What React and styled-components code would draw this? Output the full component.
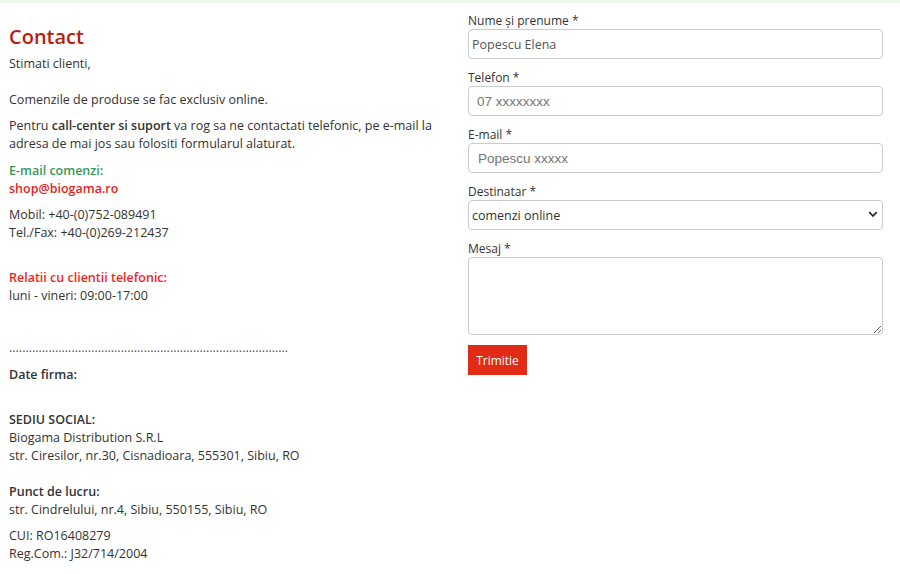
import React from "react";
import styled, { createGlobalStyle } from "styled-components";

const Global = createGlobalStyle`
  html, body { margin: 0; padding: 0; background: #fff; }
  body { font-family: "Open Sans", "Noto Sans", sans-serif; color: #333; font-size: 12.5px; }
  * { box-sizing: border-box; }
`;

const TopStrip = styled.div`
  height: 3px;
  background: #edf7ec;
`;

const Page = styled.div`
  display: grid;
  grid-template-columns: 444px 415px;
  column-gap: 15px;
  padding-left: 9px;
`;

const Info = styled.div`
  display: flex;
  flex-direction: column;
  padding-top: 21px;
`;

const Title = styled.h1`
  margin: 0;
  font-size: 20px;
  line-height: 26px;
  font-weight: 600;
  color: #b81c12;
`;

const P = styled.p`
  margin: ${(p) => p.$mt ?? 8}px 0 0;
  line-height: 18px;
  font-size: 12.5px;
  color: #333;
`;

const Strong = styled.b`
  font-weight: 600;
`;

const Accent = styled.span`
  font-weight: 600;
  color: ${(p) => p.$color};
`;

const Dots = styled.p`
  margin: ${(p) => p.$mt}px 0 0;
  line-height: 18px;
  font-size: 12.5px;
  color: #555;
  white-space: nowrap;
`;

const Form = styled.form`
  display: flex;
  flex-direction: column;
  padding-top: 8px;
`;

const Group = styled.div`
  display: flex;
  flex-direction: column;
  margin-bottom: 9px;
`;

const Label = styled.label`
  font-size: 12px;
  line-height: 18px;
  padding-top: 1px;
  margin-bottom: -1px;
  color: #333;
`;

const Input = styled.input`
  height: 30px;
  width: 100%;
  border: 1px solid #ccc;
  border-radius: 4px;
  padding: 0 ${(p) => p.$pad}px;
  font-family: "Open Sans", sans-serif;
  font-size: 12.5px;
  color: #555;
  background: #fff;
  outline: none;
  &::placeholder {
    font-family: "Liberation Sans", Arial, sans-serif;
    font-size: 13.5px;
    color: #757575;
  }
`;

const SelectWrap = styled.div`
  position: relative;
  height: 30px;
`;

const Select = styled.select`
  appearance: none;
  height: 30px;
  width: 100%;
  border: 1px solid #ccc;
  border-radius: 4px;
  padding: 0 3px;
  font-family: "Open Sans", sans-serif;
  font-size: 12.5px;
  color: #333;
  background: #fff;
  outline: none;
`;

const Chevron = styled.svg`
  position: absolute;
  right: 5px;
  top: 11px;
  pointer-events: none;
`;

const TextArea = styled.textarea`
  height: 78px;
  width: 100%;
  border: 1px solid #ccc;
  border-radius: 4px;
  resize: vertical;
  font-family: "Open Sans", sans-serif;
  font-size: 12.5px;
  outline: none;
`;

const Button = styled.button`
  align-self: flex-start;
  margin-top: 1px;
  height: 30px;
  width: 59px;
  padding: 0;
  border: none;
  background: #e12b16;
  color: #fff;
  font-family: "Open Sans", sans-serif;
  font-size: 12px;
  cursor: pointer;
`;

export default function App() {
  return (
    <>
      <Global />
      <TopStrip />
      <Page>
        <Info>
          <Title>Contact</Title>
          <P $mt={5}>
            Stimati clienti,
            <br />
            <br />
            Comenzile de produse se fac exclusiv online.
          </P>
          <P>
            Pentru <Strong>call-center si suport</Strong> va rog sa ne contactati telefonic, pe e-mail la adresa de mai jos sau folositi formularul alaturat.
          </P>
          <P $mt={9}>
            <Accent $color="#36995a">E-mail comenzi:</Accent>
            <br />
            <Accent $color="#e8231c">shop@biogama.ro</Accent>
          </P>
          <P>
            Mobil: +40-(0)752-089491
            <br />
            Tel./Fax: +40-(0)269-212437
          </P>
          <P $mt={9}>
            <br />
            <Accent $color="#ff1a1a">Relatii cu clientii telefonic:</Accent>
            <br />
            luni - vineri: 09:00-17:00
          </P>
          <P $mt={8}>&nbsp;</P>
          <Dots $mt={8}>{".".repeat(85)}</Dots>
          <P $mt={9}>
            <Strong>Date firma:</Strong>
          </P>
          <P $mt={9}>
            <br />
            <Strong>SEDIU SOCIAL:</Strong>
            <br />
            Biogama Distribution S.R.L
            <br />
            str. Ciresilor, nr.30, Cisnadioara, 555301, Sibiu, RO
            <br />
            <br />
            <Strong>Punct de lucru:</Strong>
            <br />
            str. Cindrelului, nr.4, Sibiu, 550155, Sibiu, RO
          </P>
          <P $mt={8}>
            CUI: RO16408279
            <br />
            Reg.Com.: J32/714/2004
          </P>
        </Info>
        <Form onSubmit={(e) => e.preventDefault()}>
          <Group>
            <Label>Nume și prenume *</Label>
            <Input $pad={3} defaultValue="Popescu Elena" />
          </Group>
          <Group>
            <Label>Telefon *</Label>
            <Input $pad={8} placeholder="07 xxxxxxxx" />
          </Group>
          <Group>
            <Label>E-mail *</Label>
            <Input $pad={9} placeholder="Popescu xxxxx" />
          </Group>
          <Group>
            <Label>Destinatar *</Label>
            <SelectWrap>
              <Select defaultValue="comenzi online">
                <option>comenzi online</option>
                <option>suport</option>
              </Select>
              <Chevron width="10" height="7" viewBox="0 0 10 7">
                <path d="M1.2 1.2 L5 5 L8.8 1.2" fill="none" stroke="#333" strokeWidth="1.8" />
              </Chevron>
            </SelectWrap>
          </Group>
          <Group>
            <Label>Mesaj *</Label>
            <TextArea />
          </Group>
          <Button type="submit">Trimitie</Button>
        </Form>
      </Page>
    </>
  );
}
